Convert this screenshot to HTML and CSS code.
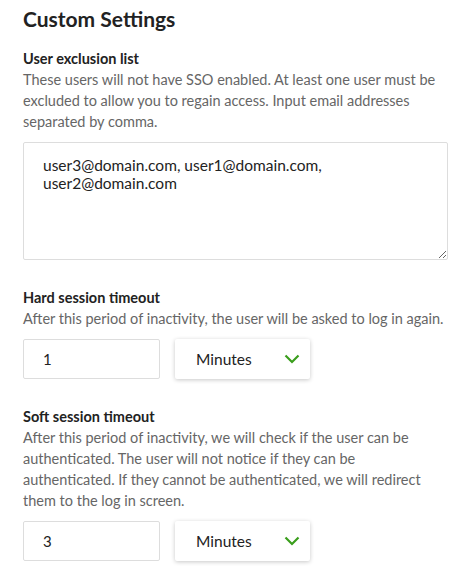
FILE: index.html
```html
<!DOCTYPE html>
<html lang="en">
<head>
    <meta charset="UTF-8">
    <meta name="viewport" content="width=device-width, initial-scale=1.0">
    <title>Custom Settings</title>
    <link rel="stylesheet" href="styles.css">
</head>
<body>
<div class="settings">
    <h1>Custom Settings</h1>

    <div class="field">
        <label for="exclusion" class="field-title">User exclusion list</label>
        <p class="field-help">These users will not have SSO enabled. At least one user must be excluded to allow you to regain access. Input email addresses separated by comma.</p>
        <textarea id="exclusion" class="exclusion">user3@domain.com, user1@domain.com, user2@domain.com</textarea>
    </div>

    <div class="field">
        <label for="hard_timeout" class="field-title">Hard session timeout</label>
        <p class="field-help">After this period of inactivity, the user will be asked to log in again.</p>
        <div class="timeout-row">
            <input type="text" id="hard_timeout" class="timeout-value" value="1">
            <div class="unit-select">
                <span>Minutes</span>
                <svg width="16" height="10" viewBox="0 0 16 10"><path d="M1.5 1.5 L8 8 L14.5 1.5" fill="none" stroke="#3a9e1c" stroke-width="2.2"/></svg>
            </div>
        </div>
    </div>

    <div class="field">
        <label for="soft_timeout" class="field-title">Soft session timeout</label>
        <p class="field-help">After this period of inactivity, we will check if the user can be authenticated. The user will not notice if they can be authenticated. If they cannot be authenticated, we will redirect them to the log in screen.</p>
        <div class="timeout-row">
            <input type="text" id="soft_timeout" class="timeout-value" value="3">
            <div class="unit-select">
                <span>Minutes</span>
                <svg width="16" height="10" viewBox="0 0 16 10"><path d="M1.5 1.5 L8 8 L14.5 1.5" fill="none" stroke="#3a9e1c" stroke-width="2.2"/></svg>
            </div>
        </div>
    </div>
</div>
</body>
</html>
```

FILE: styles.css
```css
body {
    font-family: Lato, sans-serif;
    margin: 0;
    padding: 0;
    background: #fff;
    color: #222;
}

.settings {
    padding: 6px 26px 0 23px;
}

h1 {
    font-size: 21px;
    font-weight: 700;
    line-height: 26px;
    margin: 0 0 17px;
}

.field {
    margin-bottom: 28px;
}

.field-title {
    display: block;
    font-size: 14.5px;
    font-weight: 700;
    line-height: 20px;
}

.field-help {
    margin: 0 0 10px;
    font-size: 14.5px;
    line-height: 21px;
    color: #666;
}

.exclusion {
    display: block;
    box-sizing: border-box;
    width: 100%;
    height: 118px;
    padding: 13px 19px;
    border: 1px solid #ddd;
    border-radius: 2px;
    font-family: inherit;
    font-size: 15.5px;
    line-height: 18px;
    color: #222;
    resize: vertical;
}

.timeout-row {
    display: flex;
    gap: 15px;
}

.timeout-value {
    box-sizing: border-box;
    width: 137px;
    height: 40px;
    padding: 0 19px;
    border: 1px solid #ddd;
    border-radius: 2px;
    font-family: inherit;
    font-size: 15px;
    color: #222;
}

.unit-select {
    box-sizing: border-box;
    width: 135px;
    height: 40px;
    padding: 0 10px 0 21px;
    display: flex;
    align-items: center;
    justify-content: space-between;
    border-radius: 2px;
    box-shadow: 0 1px 4px rgba(0, 0, 0, 0.22);
    font-size: 15.5px;
    color: #222;
}
```
